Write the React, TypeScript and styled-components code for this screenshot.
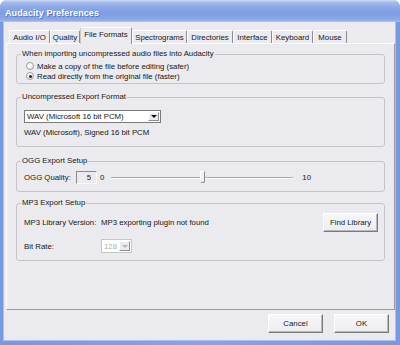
import React from "react";
import styled, { createGlobalStyle } from "styled-components";

const GlobalStyle = createGlobalStyle`
  html, body {
    margin: 0;
    padding: 0;
    background: #ffffff;
  }
  body {
    font-family: "Liberation Sans", Arial, sans-serif;
    font-size: 7.8px;
    color: #161616;
  }
`;

const Window = styled.div`
  width: 400px;
  height: 345px;
  box-sizing: border-box;
  display: flex;
  flex-direction: column;
  overflow: hidden;
  background: linear-gradient(90deg, #7898df 0%, #86a4e6 50%, #7898df 100%);
  border-radius: 7px 7px 0 0;
`;

const TitleBar = styled.div`
  height: 22px;
  flex: none;
  box-sizing: border-box;
  display: flex;
  align-items: center;
  padding: 4px 0 0 5px;
  background: linear-gradient(
    180deg,
    #d4def6 0%,
    #a6bcee 10%,
    #8aa7e6 35%,
    #7e9de2 60%,
    #89a7e7 85%,
    #9fb8ec 100%
  );
  color: #ffffff;
  font-size: 9px;
  font-weight: bold;
  letter-spacing: 0.1px;
  text-shadow: 1px 1px 0 rgba(50, 80, 160, 0.55);
`;

const Client = styled.div`
  flex: 1;
  margin: 0 5px 5px 4px;
  padding: 5px 0 0 2px;
  display: flex;
  flex-direction: column;
  background: #ebeaee;
  box-shadow: 0 0 0 1px #a9bff0;
`;

const TabRow = styled.div`
  height: 16px;
  flex: none;
  display: flex;
  align-items: flex-end;
  padding-left: 3px;
  position: relative;
  z-index: 1;
`;

const Tab = styled.div<{ $w: number; $active?: boolean }>`
  width: ${(p) => p.$w}px;
  height: ${(p) => (p.$active ? 17 : 13)}px;
  margin-bottom: ${(p) => (p.$active ? -1 : 0)}px;
  box-sizing: border-box;
  display: flex;
  align-items: center;
  justify-content: center;
  padding-bottom: ${(p) => (p.$active ? 3 : 0)}px;
  background: #ebeaee;
  border-top: 1px solid #ffffff;
  border-left: 1px solid ${(p) => (p.$active ? "#c9c9c9" : "#ffffff")};
  border-right: 1px solid #8c8c8c;
  border-radius: 2px 2px 0 0;
  white-space: nowrap;
`;

const Panel = styled.div`
  height: 267px;
  flex: none;
  box-sizing: border-box;
  display: flex;
  flex-direction: column;
  padding: 5px 9px 0 9px;
  border-top: 1px solid #ffffff;
  border-left: 1px solid #fbfbfd;
  border-right: 1px solid #9a9a9e;
  border-bottom: 1px solid #9a9a9e;
`;

const Group = styled.fieldset<{ $mt?: number; $pt: number; $pb: number }>`
  margin: ${(p) => p.$mt ?? 0}px 0 0 0;
  padding: ${(p) => p.$pt}px 6px ${(p) => p.$pb}px 7px;
  min-width: 0;
  border: 1px solid #c6c4c8;
  border-radius: 3px;
  display: flex;
  flex-direction: column;
`;

const Legend = styled.legend`
  margin-left: -3px;
  padding: 0 1px;
  line-height: 10px;
  height: 10px;
`;

const Row = styled.div<{ $h?: number; $mt?: number }>`
  display: flex;
  align-items: center;
  height: ${(p) => p.$h ?? 10}px;
  margin-top: ${(p) => p.$mt ?? 0}px;
  white-space: nowrap;
`;

const RadioRow = styled(Row)`
  padding-left: 2px;
  gap: 3px;
`;

const RadioCircle = styled.span<{ $checked?: boolean }>`
  width: 8px;
  height: 8px;
  box-sizing: border-box;
  border-radius: 50%;
  border: 1px solid #9a9aa6;
  background: radial-gradient(circle at 35% 35%, #ffffff 40%, #e4e4ea 100%);
  display: flex;
  align-items: center;
  justify-content: center;
  &::after {
    content: "";
    width: 3px;
    height: 3px;
    border-radius: 50%;
    background: ${(p) => (p.$checked ? "#222" : "transparent")};
  }
`;

const Label = styled.span<{ $w: number }>`
  width: ${(p) => p.$w}px;
  flex: none;
`;

const Combo = styled.div<{ $w: number; $h: number; $disabled?: boolean }>`
  width: ${(p) => p.$w}px;
  height: ${(p) => p.$h}px;
  box-sizing: border-box;
  display: flex;
  align-items: stretch;
  background: #ffffff;
  border: 1px solid ${(p) => (p.$disabled ? "#c6c6c6" : "#7a7a7a")};
  color: ${(p) => (p.$disabled ? "#b0b0b0" : "#161616")};
`;

const ComboText = styled.span`
  flex: 1;
  display: flex;
  align-items: center;
  padding-left: 2px;
`;

const ComboArrow = styled.span<{ $disabled?: boolean }>`
  width: 11px;
  margin: 1px;
  box-sizing: border-box;
  background: #ecebef;
  border: 1px solid;
  border-color: #ffffff #8d8d8d #8d8d8d #ffffff;
  display: flex;
  align-items: center;
  justify-content: center;
  &::after {
    content: "";
    border-left: 3px solid transparent;
    border-right: 3px solid transparent;
    border-top: 3px solid ${(p) => (p.$disabled ? "#b4b4b4" : "#111")};
  }
`;

const NumBox = styled.div`
  width: 21px;
  height: 13px;
  box-sizing: border-box;
  display: flex;
  align-items: center;
  justify-content: flex-end;
  padding-right: 5px;
  border: 1px solid;
  border-color: #8a8a8a #ffffff #ffffff #8a8a8a;
  background: #ebeaee;
`;

const SliderEnd = styled.span<{ $ml: number }>`
  margin-left: ${(p) => p.$ml}px;
`;

const Slider = styled.div`
  position: relative;
  width: 182px;
  height: 13px;
  margin-left: 7px;
  display: flex;
  align-items: center;
`;

const Track = styled.div`
  width: 100%;
  height: 2px;
  box-sizing: border-box;
  border-top: 1px solid #a8a8ac;
  border-bottom: 1px solid #ffffff;
`;

const Thumb = styled.div`
  position: absolute;
  top: 0;
  width: 5px;
  height: 12px;
  margin-left: -2px;
  box-sizing: border-box;
  background: #f2f2f4;
  border: 1px solid;
  border-color: #ffffff #8a8a8a #8a8a8a #ffffff;
  border-radius: 0 0 3px 3px;
`;

const Button = styled.button<{ $ml?: string }>`
  width: 55px;
  height: 19px;
  margin-left: ${(p) => p.$ml ?? "0"};
  padding: 0;
  box-sizing: border-box;
  font-family: inherit;
  font-size: 7.8px;
  color: #161616;
  background: linear-gradient(180deg, #f7f7f9 0%, #edecf0 100%);
  border: 1px solid;
  border-color: #ffffff #7a7a7a #7a7a7a #ffffff;
  box-shadow: inset -1px -1px 0 #b9b9bd;
  display: flex;
  align-items: center;
  justify-content: center;
`;

const Footer = styled.div`
  margin-top: 4px;
  padding-right: 6px;
  display: flex;
  justify-content: flex-end;
  gap: 11px;
`;

const tabs = [
  { name: "Audio I/O", w: 41 },
  { name: "Quality", w: 30 },
  { name: "File Formats", w: 52, active: true },
  { name: "Spectrograms", w: 55 },
  { name: "Directories", w: 46 },
  { name: "Interface", w: 39 },
  { name: "Keyboard", w: 41 },
  { name: "Mouse", w: 34 },
];

const oggQuality = 5;

export default function App() {
  return (
    <>
      <GlobalStyle />
      <Window>
        <TitleBar>Audacity Preferences</TitleBar>
        <Client>
          <TabRow>
            {tabs.map((t) => (
              <Tab key={t.name} $w={t.w} $active={t.active}>
                {t.name}
              </Tab>
            ))}
          </TabRow>
          <Panel>
            <Group $pt={2} $pb={2}>
              <Legend>When importing uncompressed audio files into Audacity</Legend>
              <RadioRow>
                <RadioCircle />
                Make a copy of the file before editing (safer)
              </RadioRow>
              <RadioRow>
                <RadioCircle $checked />
                Read directly from the original file (faster)
              </RadioRow>
            </Group>

            <Group $mt={8} $pt={8} $pb={9}>
              <Legend>Uncompressed Export Format</Legend>
              <Combo $w={137} $h={13}>
                <ComboText>WAV (Microsoft 16 bit PCM)</ComboText>
                <ComboArrow />
              </Combo>
              <Row $mt={4}>WAV (Microsoft), Signed 16 bit PCM</Row>
            </Group>

            <Group $mt={9} $pt={5} $pb={7}>
              <Legend>OGG Export Setup</Legend>
              <Row $h={13}>
                <Label $w={52}>OGG Quality:</Label>
                <NumBox>{oggQuality}</NumBox>
                <SliderEnd $ml={3}>0</SliderEnd>
                <Slider>
                  <Track />
                  <Thumb style={{ left: `${(oggQuality / 10) * 100}%` }} />
                </Slider>
                <SliderEnd $ml={9}>10</SliderEnd>
              </Row>
            </Group>

            <Group $mt={6} $pt={5} $pb={7}>
              <Legend>MP3 Export Setup</Legend>
              <Row $h={19}>
                <Label $w={77}>MP3 Library Version:</Label>
                <span>MP3 exporting plugin not found</span>
                <Button $ml="auto">Find Library</Button>
              </Row>
              <Row $h={14} $mt={7}>
                <Label $w={77}>Bit Rate:</Label>
                <Combo $w={31} $h={14} $disabled>
                  <ComboText>128</ComboText>
                  <ComboArrow $disabled />
                </Combo>
              </Row>
            </Group>
          </Panel>
          <Footer>
            <Button>Cancel</Button>
            <Button>OK</Button>
          </Footer>
        </Client>
      </Window>
    </>
  );
}
